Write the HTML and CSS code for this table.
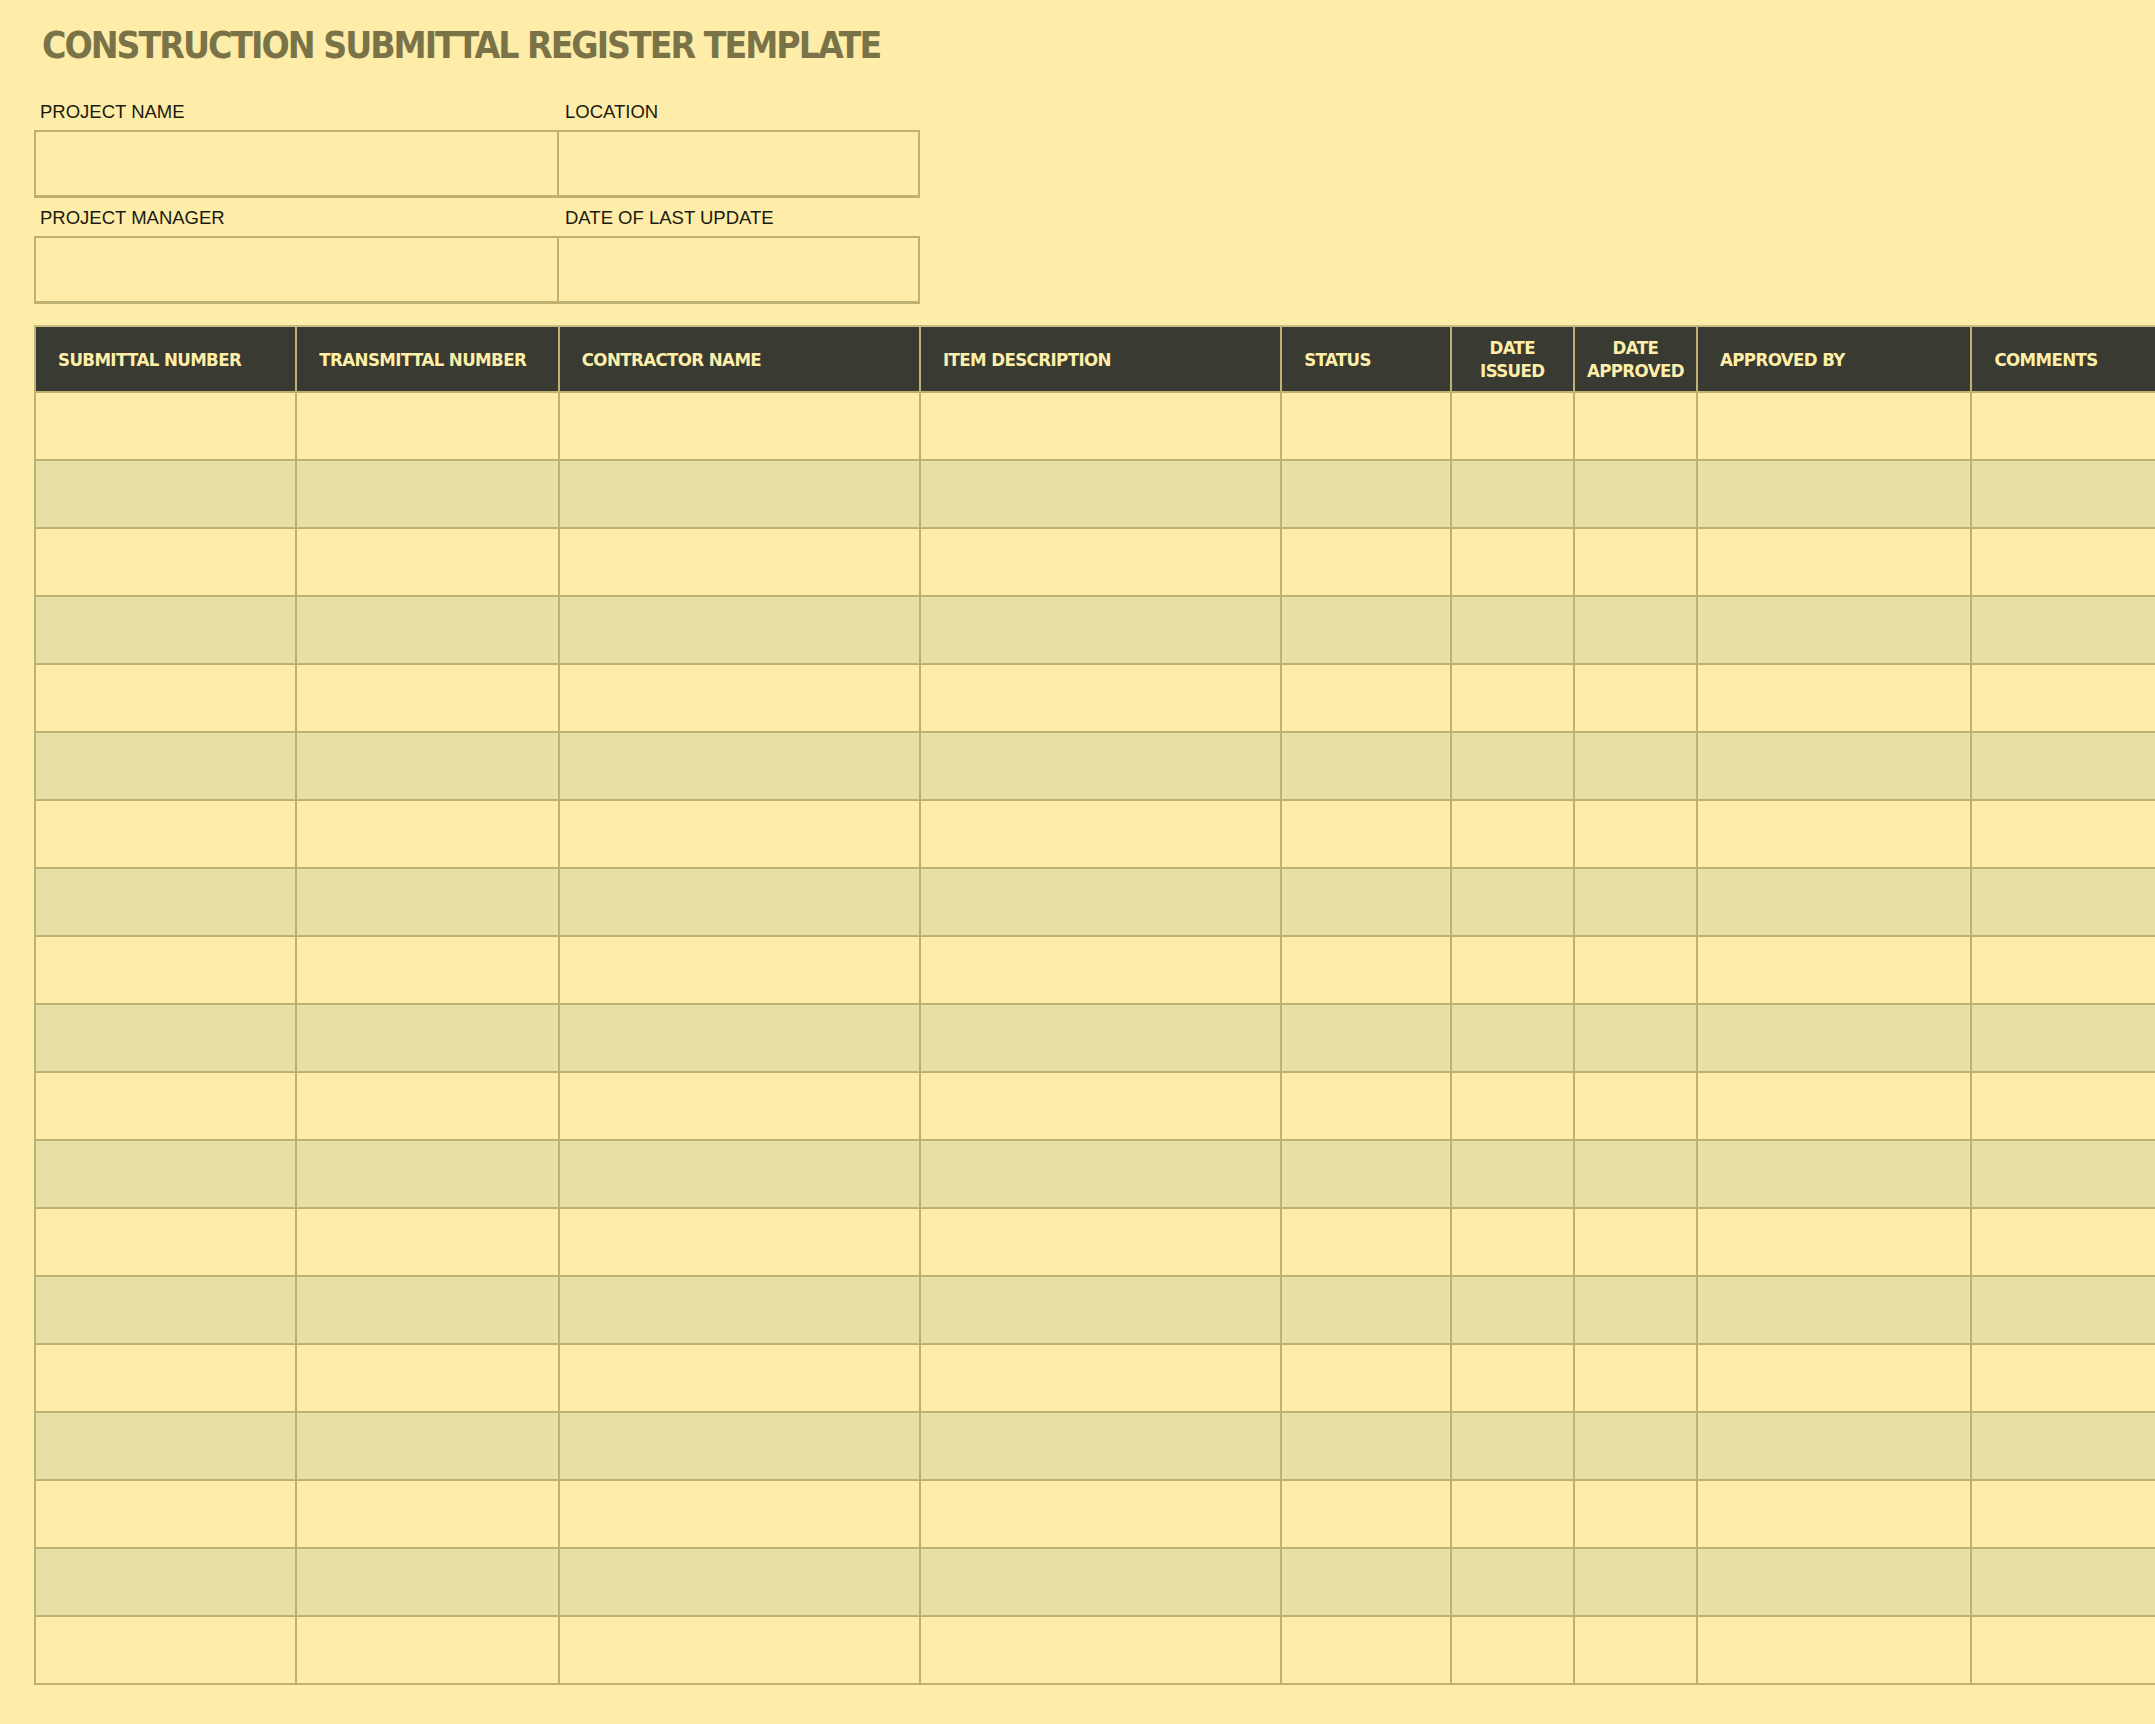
FILE: index.html
```html
<!DOCTYPE html>
<html lang="en">
<head>
<meta charset="utf-8">
<title>Construction Submittal Register Template</title>
<link rel="stylesheet" href="styles.css">
</head>
<body>
<div class="sheet">
  <h1 class="title">CONSTRUCTION SUBMITTAL REGISTER TEMPLATE</h1>
  <div class="fields">
    <div class="label">PROJECT NAME</div>
    <div class="label">LOCATION</div>
    <div class="box box-left"></div>
    <div class="box box-right"></div>
    <div class="label label-second">PROJECT MANAGER</div>
    <div class="label label-second">DATE OF LAST UPDATE</div>
    <div class="box box-left"></div>
    <div class="box box-right"></div>
  </div>
  <table class="register">
    <colgroup>
      <col class="c-sub"><col class="c-trans"><col class="c-contr"><col class="c-item"><col class="c-status"><col class="c-issued"><col class="c-approved"><col class="c-by"><col class="c-comments">
    </colgroup>
    <thead>
      <tr>
        <th>SUBMITTAL NUMBER</th>
        <th>TRANSMITTAL NUMBER</th>
        <th>CONTRACTOR NAME</th>
        <th>ITEM DESCRIPTION</th>
        <th>STATUS</th>
        <th class="center">DATE<br>ISSUED</th>
        <th class="center">DATE<br>APPROVED</th>
        <th>APPROVED BY</th>
        <th>COMMENTS</th>
      </tr>
    </thead>
    <tbody>
      <tr><td></td><td></td><td></td><td></td><td></td><td></td><td></td><td></td><td></td></tr>
      <tr><td></td><td></td><td></td><td></td><td></td><td></td><td></td><td></td><td></td></tr>
      <tr><td></td><td></td><td></td><td></td><td></td><td></td><td></td><td></td><td></td></tr>
      <tr><td></td><td></td><td></td><td></td><td></td><td></td><td></td><td></td><td></td></tr>
      <tr><td></td><td></td><td></td><td></td><td></td><td></td><td></td><td></td><td></td></tr>
      <tr><td></td><td></td><td></td><td></td><td></td><td></td><td></td><td></td><td></td></tr>
      <tr><td></td><td></td><td></td><td></td><td></td><td></td><td></td><td></td><td></td></tr>
      <tr><td></td><td></td><td></td><td></td><td></td><td></td><td></td><td></td><td></td></tr>
      <tr><td></td><td></td><td></td><td></td><td></td><td></td><td></td><td></td><td></td></tr>
      <tr><td></td><td></td><td></td><td></td><td></td><td></td><td></td><td></td><td></td></tr>
      <tr><td></td><td></td><td></td><td></td><td></td><td></td><td></td><td></td><td></td></tr>
      <tr><td></td><td></td><td></td><td></td><td></td><td></td><td></td><td></td><td></td></tr>
      <tr><td></td><td></td><td></td><td></td><td></td><td></td><td></td><td></td><td></td></tr>
      <tr><td></td><td></td><td></td><td></td><td></td><td></td><td></td><td></td><td></td></tr>
      <tr><td></td><td></td><td></td><td></td><td></td><td></td><td></td><td></td><td></td></tr>
      <tr><td></td><td></td><td></td><td></td><td></td><td></td><td></td><td></td><td></td></tr>
      <tr><td></td><td></td><td></td><td></td><td></td><td></td><td></td><td></td><td></td></tr>
      <tr><td></td><td></td><td></td><td></td><td></td><td></td><td></td><td></td><td></td></tr>
      <tr><td></td><td></td><td></td><td></td><td></td><td></td><td></td><td></td><td></td></tr>
    </tbody>
  </table>
</div>
</body>
</html>
```

FILE: styles.css
```css
html, body {
  margin: 0;
  padding: 0;
  overflow: hidden;
  background: #fdeda9;
}

.sheet {
  padding: 26px 0 0 34px;
  width: max-content;
}

.title {
  margin: 0 0 0 8px;
  font-family: "DejaVu Sans Condensed", "Liberation Sans", sans-serif;
  font-weight: bold;
  font-size: 37px;
  line-height: 40px;
  letter-spacing: -2px;
  color: #7a7347;
}

.fields {
  display: grid;
  grid-template-columns: 525px 361px;
  margin-top: 36px;
}

.label {
  font-family: "Liberation Sans", Arial, sans-serif;
  font-size: 18.5px;
  line-height: 20px;
  color: #1d1a10;
  padding-left: 6px;
  margin-bottom: 8px;
}

.label-second {
  margin-top: 10px;
}

.box {
  box-sizing: border-box;
  height: 68px;
  border-top: 2px solid #beb273;
  border-bottom: 3px solid #beb273;
}

.box-left {
  border-left: 2px solid #beb273;
  border-right: 2px solid #beb273;
}

.box-right {
  border-right: 2px solid #beb273;
}

.register {
  margin-top: 21px;
  border-collapse: separate;
  border-spacing: 0;
  table-layout: fixed;
  width: 2219px;
}

.c-sub { width: 261px; }
.c-trans { width: 260px; }
.c-contr { width: 358px; }
.c-item { width: 358px; }
.c-status { width: 168px; }
.c-issued { width: 122px; }
.c-approved { width: 122px; }
.c-by { width: 272px; }
.c-comments { width: 278px; }

.register th,
.register td {
  box-sizing: border-box;
  padding: 0;
  border-right: 2px solid #beb273;
  border-bottom: 2px solid #beb273;
}

.register th:first-child,
.register td:first-child {
  border-left: 2px solid #beb273;
}

.register th {
  height: 68px;
  border-top: 2px solid #c9bd80;
  background: #393a31;
  color: #fdefaa;
  font-family: "DejaVu Sans Condensed", "Liberation Sans", sans-serif;
  font-weight: bold;
  font-size: 18.5px;
  line-height: 23px;
  letter-spacing: -0.6px;
  text-align: left;
  padding-left: 22px;
  vertical-align: middle;
}

.register th.center {
  text-align: center;
  padding-left: 0;
}

.register td {
  height: 68px;
}

.register tbody tr:nth-child(even) td {
  background: #e7dfa4;
}
```
